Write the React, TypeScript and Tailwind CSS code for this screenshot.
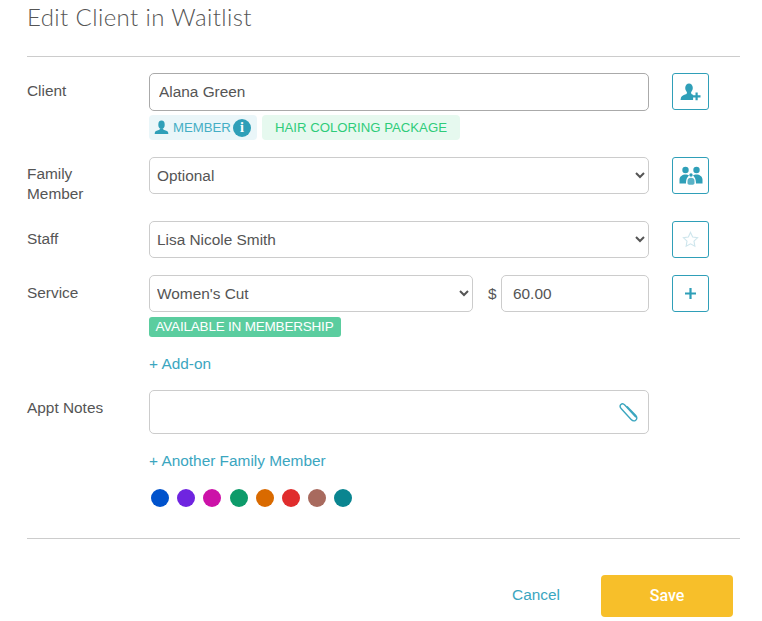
const fieldClass = "h-[37px] rounded-[5px] border border-[#cccccc] bg-white text-[15.400px] text-[#555555] outline-none";

function UserIcon({ className }: { className?: string }) {
  return (
    <svg viewBox="0 0 16 16" className={className} fill="#2f9fb8">
      <ellipse cx="8" cy="5" rx="3.4" ry="4.4" />
      <path d="M6.4 8.8h3.2l.5 1.6c2 .5 4.4 1.2 4.9 2.6l.3 2H.7l.3-2c.5-1.4 2.9-2.1 4.9-2.6z" />
    </svg>
  );
}

function UserPlusIcon() {
  return (
    <svg viewBox="0 0 22 18" className="h-[18px] w-[22px]" fill="#2f9fb8">
      <ellipse cx="9" cy="5" rx="3.8" ry="4.6" />
      <path d="M7 9h4l.4 2c.6.3 1.2.5 1.7.8V17H.5l.5-2.6C1.600 12.500 4.800 11.700 6.600 11z" />
      <path d="M15.500 9.500h2.200v2.800h2.800v2.200h-2.800v2.800h-2.200v-2.800h-2.800v-2.200h2.800z" />
    </svg>
  );
}

function FamilyIcon() {
  return (
    <svg viewBox="0 0 24 20" className="h-[20px] w-[24px]" fill="#2f9fb8">
      <circle cx="6.500" cy="4" r="3.200" />
      <circle cx="17.500" cy="4" r="3.200" />
      <circle cx="12" cy="9" r="1.700" />
      <path d="M.5 17.500v-4c0-3 3-5 6-5 1.500 0 2.600.4 3.500 1-1.500 1.400-3 3.500-3 8z" />
      <path d="M23.500 17.500v-4c0-3-3-5-6-5-1.500 0-2.600.4-3.500 1 1.500 1.400 3 3.500 3 8z" />
      <path d="M8.500 15c0-2 1.500-3.200 3.500-3.200s3.500 1.200 3.500 3.200v2c0 1-.8 1.700-1.700 1.700h-3.600c-.9 0-1.700-.7-1.700-1.700z" opacity="0.8" />
    </svg>
  );
}

function StarIcon() {
  return (
    <svg viewBox="0 0 18 18" className="h-[17px] w-[17px]" fill="white" stroke="#cfe6ed" strokeWidth="1.200">
      <path d="M9 1.500l2.300 4.900 5.200.7-3.800 3.700.9 5.300L9 13.600l-4.600 2.500.9-5.300L1.500 7.100l5.200-.7z" />
    </svg>
  );
}

function PlusIcon() {
  return (
    <svg viewBox="0 0 12 12" className="h-[11px] w-[11px]" fill="#2f9fb8">
      <path d="M4.800 0h2.400v4.800H12v2.400H7.200V12H4.800V7.200H0V4.800h4.800z" />
    </svg>
  );
}

function PaperclipIcon() {
  return (
    <svg viewBox="0 0 20 20" className="h-[20px] w-[20px]" fill="none" stroke="#3ba6bf" strokeWidth="1.400" strokeLinecap="round">
      <path d="M16.500 14.800L6 3.300C4.700 1.900 3 1.500 1.900 2.500.8 3.600 1 5.300 2.300 6.700l9.600 10.500c1.400 1.500 3.400 2.100 4.800 1 1.500-1.200 1.500-3.200.1-4.700L8.300 4.800" />
    </svg>
  );
}

function Label({ children }: { children: React.ReactNode }) {
  return <div className="w-[122px] shrink-0 pt-[8px] text-[15.400px] leading-[20px] text-[#555555]">{children}</div>;
}

function SideButton({ children }: { children: React.ReactNode }) {
  return (
    <button className="ml-[23px] flex h-[37px] w-[37px] shrink-0 items-center justify-center rounded-[3px] border border-[#2f9fb8] bg-white">
      {children}
    </button>
  );
}

const colors = ["bg-[#0052cc]", "bg-[#6f24e0]", "bg-[#cc12a8]", "bg-[#0d9b6a]", "bg-[#d96a00]", "bg-[#e02d2d]", "bg-[#a86a5e]", "bg-[#0a8590]"];

export default function App() {
  return (
    <div className="h-[621px] w-[762px] overflow-hidden bg-white pl-[27px] pr-[22px] font-['Liberation_Sans',sans-serif]">
      <h1 className="h-[56px] pt-[1px] font-['Lato',sans-serif] text-[24px] font-light leading-[32px] tracking-[0.4px] text-[#555555]">
        Edit Client in Waitlist
      </h1>
      <div className="border-t border-[#cccccc]" />

      <div className="mt-[16px] flex">
        <Label>Client</Label>
        <div className="w-[500px]">
          <input
            readOnly
            value="Alana Green"
            className="h-[38px] w-full rounded-[5px] border border-[#aaaaaa] bg-white px-[9px] text-[15.400px] text-[#555555] outline-none"
          />
          <div className="mt-[4px] flex gap-[5px]">
            <div className="flex h-[25px] w-[108px] items-center rounded-[4px] bg-[#eaf6f9] pl-[5px] text-[13.200px] text-[#45aec5]">
              <UserIcon className="h-[15px] w-[15px]" />
              <span className="ml-[4px]">MEMBER</span>
              <span className="ml-[2px] flex h-[18px] w-[18px] items-center justify-center rounded-full bg-[#2f9fb8] font-['Liberation_Serif',serif] text-[14px] font-bold text-white">i</span>
            </div>
            <div className="flex h-[25px] w-[198px] items-center rounded-[4px] bg-[#e6f9ef] pl-[13px] text-[13.200px] text-[#2ecc7a]">
              HAIR COLORING PACKAGE
            </div>
          </div>
        </div>
        <SideButton>
          <UserPlusIcon />
        </SideButton>
      </div>

      <div className="mt-[17px] flex">
        <Label>
          <div className="-mt-[1px]">Family</div>
          <div>Member</div>
        </Label>
        <select className={`${fieldClass} w-[500px] px-[3px]`}>
          <option>Optional</option>
        </select>
        <SideButton>
          <FamilyIcon />
        </SideButton>
      </div>

      <div className="mt-[17px] flex">
        <Label>Staff</Label>
        <select className={`${fieldClass} w-[500px] px-[3px]`}>
          <option>Lisa Nicole Smith</option>
        </select>
        <SideButton>
          <StarIcon />
        </SideButton>
      </div>

      <div className="mt-[17px] flex">
        <Label>Service</Label>
        <div className="w-[500px]">
          <div className="flex items-center">
            <select className={`${fieldClass} w-[324px] px-[3px]`}>
              <option>Women's Cut</option>
            </select>
            <span className="ml-[15px] w-[13px] text-[15.400px] text-[#555555]">$</span>
            <input readOnly value="60.00" className={`${fieldClass} w-[148px] px-[11px]`} />
          </div>
          <div className="mt-[5px] flex h-[20px] w-[192px] items-center justify-center rounded-[3px] bg-[#5bcd9f] pr-[1px] text-[13.500px] tracking-[-0.2px] text-white">
            AVAILABLE IN MEMBERSHIP
          </div>
          <div className="mt-[17px] text-[15.400px] leading-[20px] text-[#3ba6bf]">+ Add-on</div>
        </div>
        <SideButton>
          <PlusIcon />
        </SideButton>
      </div>

      <div className="mt-[16px] flex">
        <Label>Appt Notes</Label>
        <div className="w-[500px]">
          <div className="flex h-[44px] items-center justify-end rounded-[5px] border border-[#cccccc] pr-[9px]">
            <PaperclipIcon />
          </div>
          <div className="mt-[17px] text-[15.400px] leading-[20px] text-[#3ba6bf]">+ Another Family Member</div>
          <div className="ml-[2px] mt-[18px] flex gap-[8.200px]">
            {colors.map((c) => (
              <span key={c} className={`h-[18px] w-[18px] rounded-full ${c}`} />
            ))}
          </div>
        </div>
      </div>

      <div className="mt-[31px] border-t border-[#cccccc]" />

      <div className="mt-[36px] flex items-center justify-end pr-[7px]">
        <span className="pb-[2px] text-[15.400px] text-[#3ba6bf]">Cancel</span>
        <button className="ml-[41px] h-[42px] w-[132px] rounded-[4px] bg-[#f7bf2a] font-['Roboto',sans-serif] text-[16px] font-medium text-white">Save</button>
      </div>
    </div>
  );
}
